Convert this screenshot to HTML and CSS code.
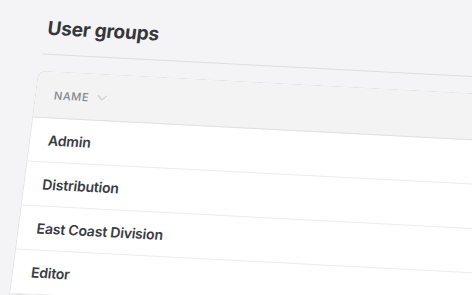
FILE: index.html
```html
<!DOCTYPE html>
<html lang="en">
<head>
    <meta charset="UTF-8">
    <title>User groups</title>
    <link rel="stylesheet" href="styles.css">
</head>
<body>
    <div class="page">
        <h1 class="page-title">User groups</h1>
        <div class="divider"></div>

        <div class="table">
            <div class="table-head">
                <span class="col-label">Name</span>
                <svg class="sort-icon" width="10" height="6" viewBox="0 0 10 6">
                    <path d="M1 1 L5 5 L9 1" fill="none" stroke="#cfcfd3" stroke-width="1.3" stroke-linecap="round" stroke-linejoin="round"/>
                </svg>
            </div>
            <div class="table-row">Admin</div>
            <div class="table-row">Distribution</div>
            <div class="table-row">East Coast Division</div>
            <div class="table-row">Editor</div>
        </div>
    </div>
</body>
</html>
```

FILE: styles.css
```css
html, body {
    margin: 0;
    height: 100%;
    overflow: hidden;
    background-color: #f4f4f6;
}
body {
    font-family: Inter, "Noto Sans", sans-serif;
    color: #3b3b42;
}
/* the whole page is photographed at an angle */
.page {
    width: 700px;
    padding: 12px 0 0 49px;
    transform-origin: 0 0;
    transform: matrix(1, 0.052, -0.13, 1, 0, 0);
}
.page-title {
    margin: 0 0 0 2px;
    font-size: 19px;
    line-height: 28px;
    font-weight: 700;
    letter-spacing: -0.2px;
    color: #36363c;
}
.divider {
    height: 1px;
    margin-top: 11px;
    background-color: #dedee2;
}
.table {
    margin-top: 16px;
    margin-left: -2px;
    background-color: white;
    border: 1px solid #e2e2e5;
    border-right: none;
    border-radius: 8px 0 0 0;
    overflow: hidden;
}
.table-head {
    display: flex;
    align-items: center;
    gap: 8px;
    height: 45px;
    padding-left: 18px;
    background-color: #f3f3f4;
    border-bottom: 1px solid #e0e0e3;
}
.col-label {
    font-size: 11px;
    font-weight: 500;
    letter-spacing: 0.6px;
    text-transform: uppercase;
    color: #86868e;
}
.table-row {
    display: flex;
    align-items: center;
    height: 43px;
    padding-left: 18px;
    font-size: 14px;
    font-weight: 600;
    letter-spacing: -0.2px;
    border-bottom: 1px solid #ececee;
}
```
